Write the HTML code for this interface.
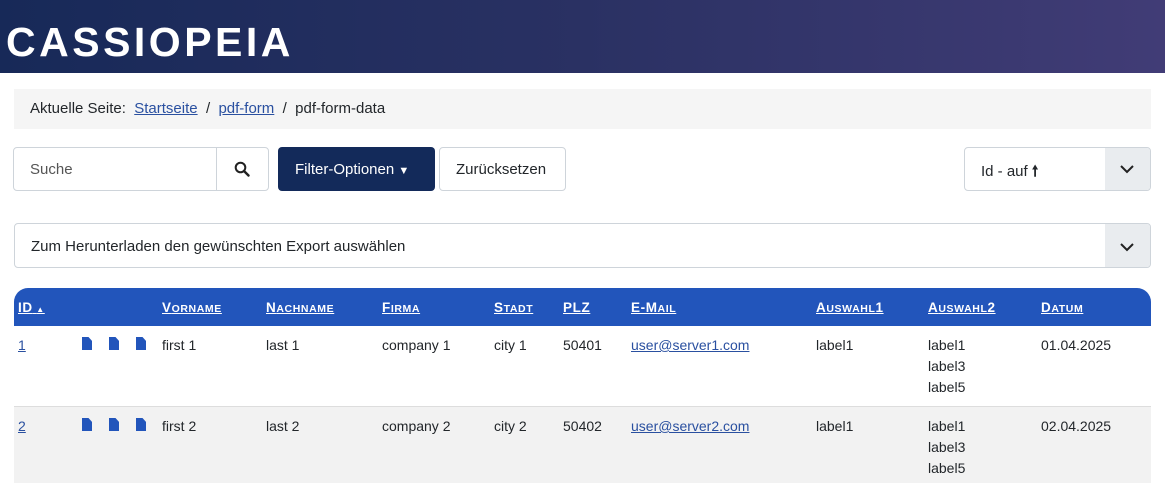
<!DOCTYPE html>
<html><head><meta charset="utf-8"><style>
*{box-sizing:border-box;margin:0;padding:0}
body{width:1165px;height:483px;overflow:hidden;background:#fff;font-family:"Liberation Sans",sans-serif;color:#22262a;position:relative}
.hdr{position:absolute;left:0;top:0;width:1165px;height:73px;background:linear-gradient(90deg,#172958 0%,#2a3163 50%,#413c76 100%)}
.logo{position:absolute;left:6px;top:20px;color:#fff;font-weight:bold;font-size:41px;letter-spacing:3.5px;line-height:44px}
.bc{position:absolute;left:14px;top:89px;width:1137px;height:40px;background:#f5f5f5;font-size:15px;line-height:40px;padding-left:16px}
.bc a{color:#2a50a0;text-decoration:underline}
.box{position:absolute;border:1px solid #ced4da;border-radius:4px;background:#fff;font-size:15px}
.ab{position:absolute}
a{color:#2a50a0;text-decoration:underline}
.th{position:absolute;top:288px;left:14px;width:1137px;height:38px;background:#2255bb;border-radius:14px 14px 0 0}
.th span{position:absolute;top:12px;color:#fff;font-weight:bold;font-size:10.5px;text-transform:uppercase;text-decoration:underline;letter-spacing:.6px}
.th b{font-size:13.5px}
.row{position:absolute;left:14px;width:1137px;font-size:14px;line-height:21px}
.row span{position:absolute;top:9px}
.doc{position:absolute;top:11px;width:10px;height:13px;background:#2255bb;clip-path:polygon(0 0,65% 0,100% 30%,100% 100%,0 100%)}
</style></head><body>
<div class="hdr"><div class="logo">CASSIOPEIA</div></div>
<div class="bc">Aktuelle Seite:&nbsp; <a>Startseite</a> &nbsp;/&nbsp; <a>pdf-form</a> &nbsp;/&nbsp; pdf-form-data</div>
<div class="box" style="left:13px;top:147px;width:256px;height:44px">
 <span class="ab" style="left:16px;top:13px;color:#555">Suche</span>
 <div class="ab" style="left:202px;top:-1px;width:1px;height:44px;background:#ced4da"></div>
 <svg class="ab" style="left:220px;top:13px" width="16" height="16" viewBox="0 0 16 16"><circle cx="6.5" cy="6.5" r="4.8" stroke="#222" stroke-width="2" fill="none"/><path d="M10 10l4.5 4.5" stroke="#222" stroke-width="2.4" stroke-linecap="round"/></svg>
</div>
<div class="ab" style="left:278px;top:147px;width:157px;height:44px;background:#132a5a;border-radius:4px;color:#fff;font-size:15px;line-height:46px;padding-left:17px">Filter-Optionen <span style="font-size:11px">&#9660;</span></div>
<div class="box" style="left:439px;top:147px;width:127px;height:44px;line-height:44px;padding-left:16px">Zurücksetzen</div>
<div class="box" style="left:964px;top:147px;width:187px;height:44px;overflow:hidden">
 <span class="ab" style="left:16px;top:13px">Id - auf <b>&#129045;</b></span>
 <div class="ab" style="left:140px;top:0;width:46px;height:44px;background:#e9ecef"></div>
 <svg class="ab" style="left:154px;top:16px" width="16" height="10" viewBox="0 0 16 10"><path d="M2 2l6 6 6-6" stroke="#222" stroke-width="2" fill="none"/></svg>
</div>
<div class="box" style="left:14px;top:223px;width:1137px;height:45px;overflow:hidden">
 <span class="ab" style="left:16px;top:14px">Zum Herunterladen den gewünschten Export auswählen</span>
 <div class="ab" style="left:1090px;top:0;width:46px;height:45px;background:#e9ecef"></div>
 <svg class="ab" style="left:1104px;top:18px" width="16" height="10" viewBox="0 0 16 10"><path d="M2 2l6 6 6-6" stroke="#222" stroke-width="2" fill="none"/></svg>
</div>
<div class="th">
<span style="left:4px"><b>ID</b> <span style="position:static;font-size:8px;text-decoration:none">&#9650;</span></span>
<span style="left:148px"><b>V</b>orname</span><span style="left:252px"><b>N</b>achname</span><span style="left:368px"><b>F</b>irma</span>
<span style="left:480px"><b>S</b>tadt</span><span style="left:549px"><b>PLZ</b></span><span style="left:617px"><b>E-M</b>ail</span>
<span style="left:802px"><b>A</b>uswahl<b>1</b></span><span style="left:914px"><b>A</b>uswahl<b>2</b></span><span style="left:1027px"><b>D</b>atum</span>
</div>
<div class="row" style="top:326px;height:81px;background:#fff;border-bottom:1px solid #ddd">
<span style="left:4px"><a>1</a></span><i class="doc" style="left:68px"></i><i class="doc" style="left:95px"></i><i class="doc" style="left:122px"></i>
<span style="left:148px">first 1</span><span style="left:252px">last 1</span><span style="left:368px">company 1</span><span style="left:480px">city 1</span><span style="left:549px">50401</span>
<span style="left:617px"><a>user@server1.com</a></span><span style="left:802px">label1</span><span style="left:914px">label1<br>label3<br>label5</span><span style="left:1027px">01.04.2025</span>
</div>
<div class="row" style="top:407px;height:76px;background:#f2f2f2">
<span style="left:4px"><a>2</a></span><i class="doc" style="left:68px"></i><i class="doc" style="left:95px"></i><i class="doc" style="left:122px"></i>
<span style="left:148px">first 2</span><span style="left:252px">last 2</span><span style="left:368px">company 2</span><span style="left:480px">city 2</span><span style="left:549px">50402</span>
<span style="left:617px"><a>user@server2.com</a></span><span style="left:802px">label1</span><span style="left:914px">label1<br>label3<br>label5</span><span style="left:1027px">02.04.2025</span>
</div>
</body></html>
